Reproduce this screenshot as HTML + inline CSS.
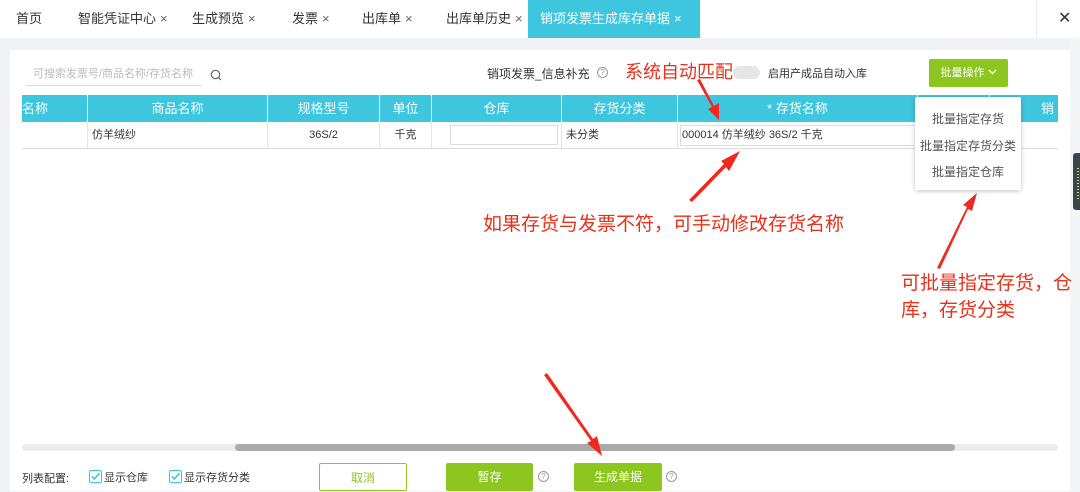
<!DOCTYPE html>
<html><head><meta charset="utf-8"><style>
*{margin:0;padding:0;box-sizing:border-box}
body{width:1080px;height:491px;overflow:hidden;background:#f0f2f5;font-family:"Liberation Sans","Noto Sans CJK SC",sans-serif;font-size:12px;color:#333;position:relative}
.abs{position:absolute}
.tabs{left:0;top:0;width:1080px;height:38px;background:#fff}
.tab{position:absolute;top:0;height:38px;line-height:38px;font-size:13px;color:#333}
.tab .x{color:#666;font-size:13px;margin-left:4px}
.panel{left:10px;top:50px;width:1060px;height:441px;background:#fff}
.hdr{left:22px;top:95px;width:1036px;height:27px;background:#3ec6de;color:#fff;font-size:13px}
.hdr div,.row div{position:absolute;top:0;height:100%;border-right:1px solid #fff;text-align:center}
.hdr div{line-height:27px}
.row{left:22px;top:122px;width:1036px;height:27px;border-bottom:1px solid #dcdcdc;font-size:11px}
.row div{line-height:27px;border-right:1px solid #e3e3e3}
.red{color:#e8311a;font-size:19px;position:absolute;white-space:nowrap}
.btn{position:absolute;top:463px;height:28px;line-height:28px;text-align:center;border-radius:2px;font-size:12px}
.g{background:#8cc61f;color:#fff}
.cb{display:inline-block;width:13px;height:13px;border:1px solid #3ec6de;border-radius:2px;vertical-align:-2px;margin-right:2px;position:relative}
.q{position:absolute;width:11px;height:11px;border:1px solid #999;border-radius:50%;font-size:8px;line-height:9px;text-align:center;color:#999}
</style></head><body>
<div class="abs tabs">
<div class="tab" style="left:16px">首页</div>
<div class="tab" style="left:78px">智能凭证中心<span class="x">×</span></div>
<div class="tab" style="left:192px">生成预览<span class="x">×</span></div>
<div class="tab" style="left:292px">发票<span class="x">×</span></div>
<div class="tab" style="left:362px">出库单<span class="x">×</span></div>
<div class="tab" style="left:446px">出库单历史<span class="x">×</span></div>
<div class="tab" style="left:528px;width:172px;background:#3ec6de;color:#fff;padding-left:12px">销项发票生成库存单据<span class="x" style="color:#fff">×</span></div>
<div class="tab" style="left:1058px;font-size:16px;color:#333">✕</div>
</div>
<div class="abs" style="left:1036px;top:0;width:1px;height:38px;background:#eee"></div>
<div class="abs panel"></div>
<div class="abs" style="left:1070px;top:38px;width:10px;height:453px;background:#f4f5f7"></div>
<div class="abs" style="left:1073px;top:153px;width:7px;height:57px;background:#3c4450;border-radius:3px 0 0 3px"></div>
<div class="abs" style="left:1077px;top:168px;width:2px;height:32px;background:repeating-linear-gradient(#c9d94a 0 1px,transparent 1px 3px)"></div>

<div class="abs" style="left:26px;top:65px;width:176px;height:21px;border-bottom:1px solid #ddd;color:#bbb;font-size:11px;padding-left:7px;line-height:18px">可搜索发票号/商品名称/存货名称</div>
<svg class="abs" style="left:210px;top:69px" width="12" height="12"><circle cx="5.5" cy="5.5" r="4.2" fill="none" stroke="#666" stroke-width="1.2"/><line x1="8.5" y1="8.5" x2="11" y2="11" stroke="#666" stroke-width="1.2"/></svg>
<div class="abs" style="left:487px;top:65px;font-size:12px">销项发票_信息补充</div>
<div class="q" style="left:597px;top:67px">?</div>
<div class="abs" style="left:733px;top:66px;width:27px;height:13px;border-radius:7px;background:#e6e6e6"></div>
<div class="abs" style="left:768px;top:65px;font-size:11px">启用产成品自动入库</div>
<div class="abs g" style="left:929px;top:59px;width:79px;height:28px;line-height:28px;text-align:center;border-radius:2px;font-size:11px">批量操作 <svg width="9" height="6" style="vertical-align:1px"><path d="M1 1l3.5 3.5L8 1" fill="none" stroke="#fff" stroke-width="1.3"/></svg></div>

<div class="abs hdr">
<div style="left:0;width:66px;text-align:left">名称</div>
<div style="left:66px;width:180px">商品名称</div>
<div style="left:246px;width:112px">规格型号</div>
<div style="left:358px;width:52px">单位</div>
<div style="left:410px;width:130px">仓库</div>
<div style="left:540px;width:116px">存货分类</div>
<div style="left:656px;width:240px">* 存货名称</div>
<div style="left:896px;width:72px"></div>
<div style="left:968px;width:68px;border:none;text-align:right;padding-right:4px">销</div>
</div>
<div class="abs row">
<div style="left:0;width:66px"></div>
<div style="left:66px;width:180px;text-align:left;padding-left:4px">仿羊绒纱</div>
<div style="left:246px;width:112px">36S/2</div>
<div style="left:358px;width:52px">千克</div>
<div style="left:410px;width:130px"><span style="position:absolute;left:18px;top:3px;width:108px;height:20px;border:1px solid #dcdcdc"></span></div>
<div style="left:540px;width:116px;text-align:left;padding-left:4px">未分类</div>
<div style="left:656px;width:240px;text-align:left;padding-left:4px;border:none"><span style="position:absolute;left:2px;top:3px;width:234px;height:21px;border:1px solid #dcdcdc;border-right:none"></span><span style="position:relative">000014 仿羊绒纱 36S/2 千克</span></div>
</div>

<div class="abs" style="left:915px;top:97px;width:106px;height:93px;background:#fff;box-shadow:0 1px 5px rgba(0,0,0,.25);border-radius:2px;font-size:12px;color:#555;text-align:center">
<div style="position:absolute;left:0;width:100%;top:13px">批量指定存货</div>
<div style="position:absolute;left:0;width:100%;top:40px">批量指定存货分类</div>
<div style="position:absolute;left:0;width:100%;top:66px">批量指定仓库</div>
</div>

<div class="abs" style="left:22px;top:444px;width:1036px;height:7px;background:#ececec;border-radius:4px"></div>
<div class="abs" style="left:235px;top:444px;width:720px;height:7px;background:#aaa;border-radius:4px"></div>

<div class="abs" style="left:22px;top:470px;font-size:11px">列表配置:</div>
<div class="abs" style="left:89px;top:469px;font-size:11px"><span class="cb"><svg width="11" height="11" style="position:absolute;left:0;top:0"><path d="M2 5.5l2.5 2.5L9.5 2" fill="none" stroke="#3ec6de" stroke-width="1.6"/></svg></span>显示仓库</div>
<div class="abs" style="left:169px;top:469px;font-size:11px"><span class="cb"><svg width="11" height="11" style="position:absolute;left:0;top:0"><path d="M2 5.5l2.5 2.5L9.5 2" fill="none" stroke="#3ec6de" stroke-width="1.6"/></svg></span>显示存货分类</div>
<div class="btn" style="left:319px;width:88px;border:1px solid #8cc61f;color:#8cc61f;background:#fff">取消</div>
<div class="btn g" style="left:446px;width:87px">暂存</div>
<div class="q" style="left:538px;top:471px">?</div>
<div class="btn g" style="left:574px;width:88px">生成单据</div>
<div class="q" style="left:666px;top:471px">?</div>

<div class="red" style="left:625px;top:58px;font-size:18px">系统自动匹配</div>
<div class="red" style="left:483px;top:209px">如果存货与发票不符，可手动修改存货名称</div>
<div class="red" style="left:901px;top:270px;line-height:27px">可批量指定存货，仓<br>库，存货分类</div>

<svg class="abs" style="left:0;top:0" width="1080" height="491">
<g fill="#f0281e">
<polygon points="697,80 700,79 714,106 719,103 719,120 708,109 712,107"/>
<polygon points="689,200 692,202 726,167 729,171 740,151 721,161 724,164"/>
<polygon points="937,268 940,269 968,209 972,211 977,193 963,205 967,207"/>
<polygon points="544,375 547,373 593,439 597,436 602,456 587,443 591,441"/>
</g>
</svg>
</body></html>
